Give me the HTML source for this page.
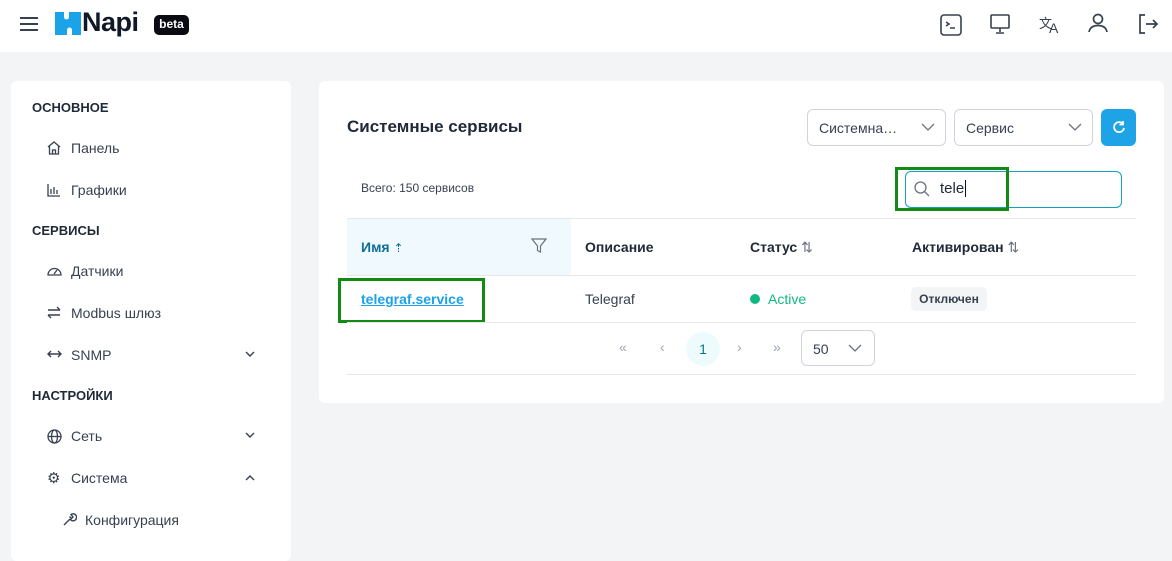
<!DOCTYPE html>
<html><head><meta charset="utf-8"><style>
*{box-sizing:border-box;margin:0;padding:0}
body{width:1172px;height:553px;overflow:hidden;background:#f3f4f6;font-family:"Liberation Sans",sans-serif;color:#1f2937;position:relative}
.a{position:absolute}
.hdr{left:0;top:0;width:1172px;height:52px;background:#fff}
.side{left:11px;top:81px;width:280px;height:480px;background:#fff;border-radius:6px}
.main{left:319px;top:81px;width:845px;height:322px;background:#fff;border-radius:6px}
.sec{font-size:13px;font-weight:bold;color:#1f2937;left:32px}
.it{font-size:14px;color:#374151;left:71px}
.ic{left:47px}
.sel{border:1px solid #d1d5db;border-radius:6px;background:#fff;height:37px;font-size:14px;color:#374151;padding:10px 11px}
.th{font-size:14px;font-weight:bold;color:#1f2937;top:239px}
svg{display:block}
</style></head><body>
<div class="a hdr"></div>
<svg class="a" style="left:19px;top:16px" width="20" height="16"><path d="M1 2h18M1 8h18M1 14h18" stroke="#374151" stroke-width="2"/></svg>
<svg class="a" style="left:55px;top:12px" width="26" height="23"><path d="M0 0h9v5a2.5 2.5 0 0 0 5 0V0h12v23h-9v-5a2.5 2.5 0 0 0-5 0v5H0z" fill="#1aa3e8"/></svg>
<div class="a" style="left:82px;top:7px;font-size:27px;font-weight:bold;color:#111827;letter-spacing:-0.5px">Napi</div>
<div class="a" style="left:154px;top:15px;width:35px;height:20px;background:#0b0b14;border-radius:5px;color:#fff;font-size:12px;font-weight:bold;text-align:center;line-height:19px">beta</div>
<svg class="a" style="left:939px;top:13px" width="24" height="24" fill="none" stroke="#374151" stroke-width="1.6"><rect x="2" y="2" width="20" height="20" rx="3"/><path d="M7 9l3 2-3 2M11 15h5"/></svg>
<svg class="a" style="left:989px;top:13px" width="22" height="22" fill="none" stroke="#374151" stroke-width="1.6"><rect x="2" y="2" width="18" height="13" rx="1"/><path d="M11 15v4M7 20h8"/></svg>
<div class="a" style="left:1039px;top:13px;font-size:13px;color:#374151">文<span style="font-size:14px;position:relative;top:5px;left:-3px">A</span></div>
<svg class="a" style="left:1087px;top:13px" width="22" height="20" fill="none" stroke="#374151" stroke-width="1.7"><circle cx="11" cy="6" r="4.5"/><path d="M2 19c1-5 5-6.5 9-6.5s8 1.5 9 6.5"/></svg>
<svg class="a" style="left:1137px;top:13px" width="22" height="22" fill="none" stroke="#374151" stroke-width="1.7"><path d="M8 2H3v18h5M9 11h11M16 7l4 4-4 4"/></svg>

<div class="a side"></div>
<div class="a sec" style="top:100px">ОСНОВНОЕ</div>
<div class="a sec" style="top:223px">СЕРВИСЫ</div>
<div class="a sec" style="top:388px">НАСТРОЙКИ</div>
<svg class="a ic" style="top:141px" width="14" height="14" fill="none" stroke="#374151" stroke-width="1.3"><path d="M1 6l6-5 6 5M2.5 5v8h9V5M5.5 13V9h3v4"/></svg><div class="a it" style="top:140px">Панель</div>
<svg class="a ic" style="top:183px" width="14" height="14" fill="none" stroke="#374151" stroke-width="1.3"><path d="M1 1v12h12M4 11V6M7 11V4M10 11V7"/></svg><div class="a it" style="top:182px">Графики</div>
<svg class="a ic" style="top:264px" width="15" height="13" fill="none" stroke="#374151" stroke-width="1.3"><path d="M1 11a6.5 6.5 0 1 1 13 0zM7 10l3-4"/></svg><div class="a it" style="top:263px">Датчики</div>
<svg class="a ic" style="top:306px" width="14" height="13" fill="none" stroke="#374151" stroke-width="1.4"><path d="M1 4h12M10 1l3 3M13 9H1M4 12L1 9"/></svg><div class="a it" style="top:305px">Modbus шлюз</div>
<svg class="a ic" style="top:349px" width="15" height="10" fill="none" stroke="#374151" stroke-width="1.4"><path d="M1 5h13M4 2L1 5l3 3M11 2l3 3-3 3"/></svg><div class="a it" style="top:347px">SNMP</div>
<svg class="a ic" style="top:429px" width="15" height="15" fill="none" stroke="#374151" stroke-width="1.3"><circle cx="7.5" cy="7.5" r="6.5"/><ellipse cx="7.5" cy="7.5" rx="3" ry="6.5"/><path d="M1 7.5h13"/></svg><div class="a it" style="top:428px">Сеть</div>
<div class="a ic" style="top:469px;font-size:15px;color:#374151">⚙</div><div class="a it" style="top:470px">Система</div>
<svg class="a" style="left:62px;top:512px" width="15" height="15" fill="none" stroke="#374151" stroke-width="1.4"><path d="M2 13l6-6M8 7a3.5 3.5 0 1 0 1-4.5L11 5l-1.5 1.5-2-2"/></svg><div class="a it" style="left:85px;top:512px">Конфигурация</div>
<svg class="a" style="left:245px;top:350px" width="10" height="8"><path d="M1 2l4 4 4-4" stroke="#374151" fill="none" stroke-width="1.4"/></svg>
<svg class="a" style="left:245px;top:431px" width="10" height="8"><path d="M1 2l4 4 4-4" stroke="#374151" fill="none" stroke-width="1.4"/></svg>
<svg class="a" style="left:245px;top:474px" width="10" height="8"><path d="M1 6l4-4 4 4" stroke="#374151" fill="none" stroke-width="1.4"/></svg>

<div class="a main"></div>
<div class="a" style="left:347px;top:117px;font-size:17px;font-weight:bold;color:#1f2937">Системные сервисы</div>
<div class="a sel" style="left:807px;top:109px;width:139px">Системна…</div>
<div class="a sel" style="left:954px;top:109px;width:139px">Сервис</div>
<svg class="a" style="left:921px;top:123px" width="14" height="9"><path d="M1 1l6 6 6-6" stroke="#6b7280" fill="none" stroke-width="1.3"/></svg>
<svg class="a" style="left:1068px;top:123px" width="14" height="9"><path d="M1 1l6 6 6-6" stroke="#6b7280" fill="none" stroke-width="1.3"/></svg>
<div class="a" style="left:1101px;top:109px;width:35px;height:37px;background:#1ea4e6;border-radius:6px"></div>
<svg class="a" style="left:1112px;top:120px" width="14" height="14" fill="none" stroke="#fff" stroke-width="1.8"><path d="M11 4A5 5 0 1 0 12 8M11 1v3.5H7.5"/></svg>
<div class="a" style="left:361px;top:181px;font-size:12px;color:#374151">Всего: 150 сервисов</div>
<div class="a" style="left:905px;top:171px;width:217px;height:37px;border:1px solid #14a0c0;border-radius:6px"></div>
<svg class="a" style="left:914px;top:181px" width="16" height="16" fill="none" stroke="#6b7280" stroke-width="1.3"><circle cx="6.5" cy="6.5" r="5.5"/><path d="M10.5 10.5l4.5 4.5"/></svg>
<div class="a" style="left:940px;top:180px;font-size:15px;color:#1f2937">tele<span style="border-left:1px solid #111;margin-left:1px"></span></div>
<div class="a" style="left:895px;top:167px;width:114px;height:44px;border:3px solid #138a13"></div>

<div class="a" style="left:347px;top:218px;width:789px;height:1px;background:#e5e7eb"></div>
<div class="a" style="left:347px;top:219px;width:224px;height:56px;background:#f0fafe"></div>
<div class="a th" style="left:361px;color:#0e6f95">Имя <span style="font-weight:normal;font-size:12px">⇡</span></div>
<svg class="a" style="left:531px;top:238px" width="16" height="16" fill="none" stroke="#6b7280" stroke-width="1.2"><path d="M1 1h14l-5.5 7v6l-3-1.5V8z"/></svg>
<div class="a th" style="left:585px">Описание</div>
<div class="a th" style="left:750px">Статус <span style="font-weight:normal;color:#6b7280">⇅</span></div>
<div class="a th" style="left:912px">Активирован <span style="font-weight:normal;color:#6b7280">⇅</span></div>
<div class="a" style="left:347px;top:275px;width:789px;height:1px;background:#e5e7eb"></div>
<div class="a" style="left:361px;top:291px;font-size:14px;font-weight:bold;color:#1aa3e8;text-decoration:underline">telegraf.service</div>
<div class="a" style="left:585px;top:291px;font-size:14px;color:#374151">Telegraf</div>
<div class="a" style="left:750px;top:294px;width:10px;height:10px;border-radius:50%;background:#10b981"></div>
<div class="a" style="left:768px;top:291px;font-size:14px;color:#10b981">Active</div>
<div class="a" style="left:911px;top:287px;width:76px;height:24px;background:#f3f4f6;border-radius:5px;font-size:12px;font-weight:bold;color:#374151;text-align:center;line-height:24px">Отключен</div>
<div class="a" style="left:338px;top:278px;width:147px;height:45px;border:3px solid #138a13"></div>
<div class="a" style="left:347px;top:322px;width:789px;height:1px;background:#e5e7eb"></div>
<div class="a" style="left:619px;top:339px;font-size:14px;color:#9ca3af">«</div>
<div class="a" style="left:660px;top:339px;font-size:14px;color:#9ca3af">‹</div>
<div class="a" style="left:686px;top:332px;width:34px;height:34px;border-radius:50%;background:#eefbfd;font-size:14px;color:#0e7490;text-align:center;line-height:34px">1</div>
<div class="a" style="left:737px;top:339px;font-size:14px;color:#9ca3af">›</div>
<div class="a" style="left:773px;top:339px;font-size:14px;color:#9ca3af">»</div>
<div class="a sel" style="left:801px;top:330px;width:74px;height:36px">50</div>
<svg class="a" style="left:848px;top:344px" width="14" height="9"><path d="M1 1l6 6 6-6" stroke="#6b7280" fill="none" stroke-width="1.3"/></svg>
<div class="a" style="left:347px;top:374px;width:789px;height:1px;background:#e5e7eb"></div>
</body></html>
